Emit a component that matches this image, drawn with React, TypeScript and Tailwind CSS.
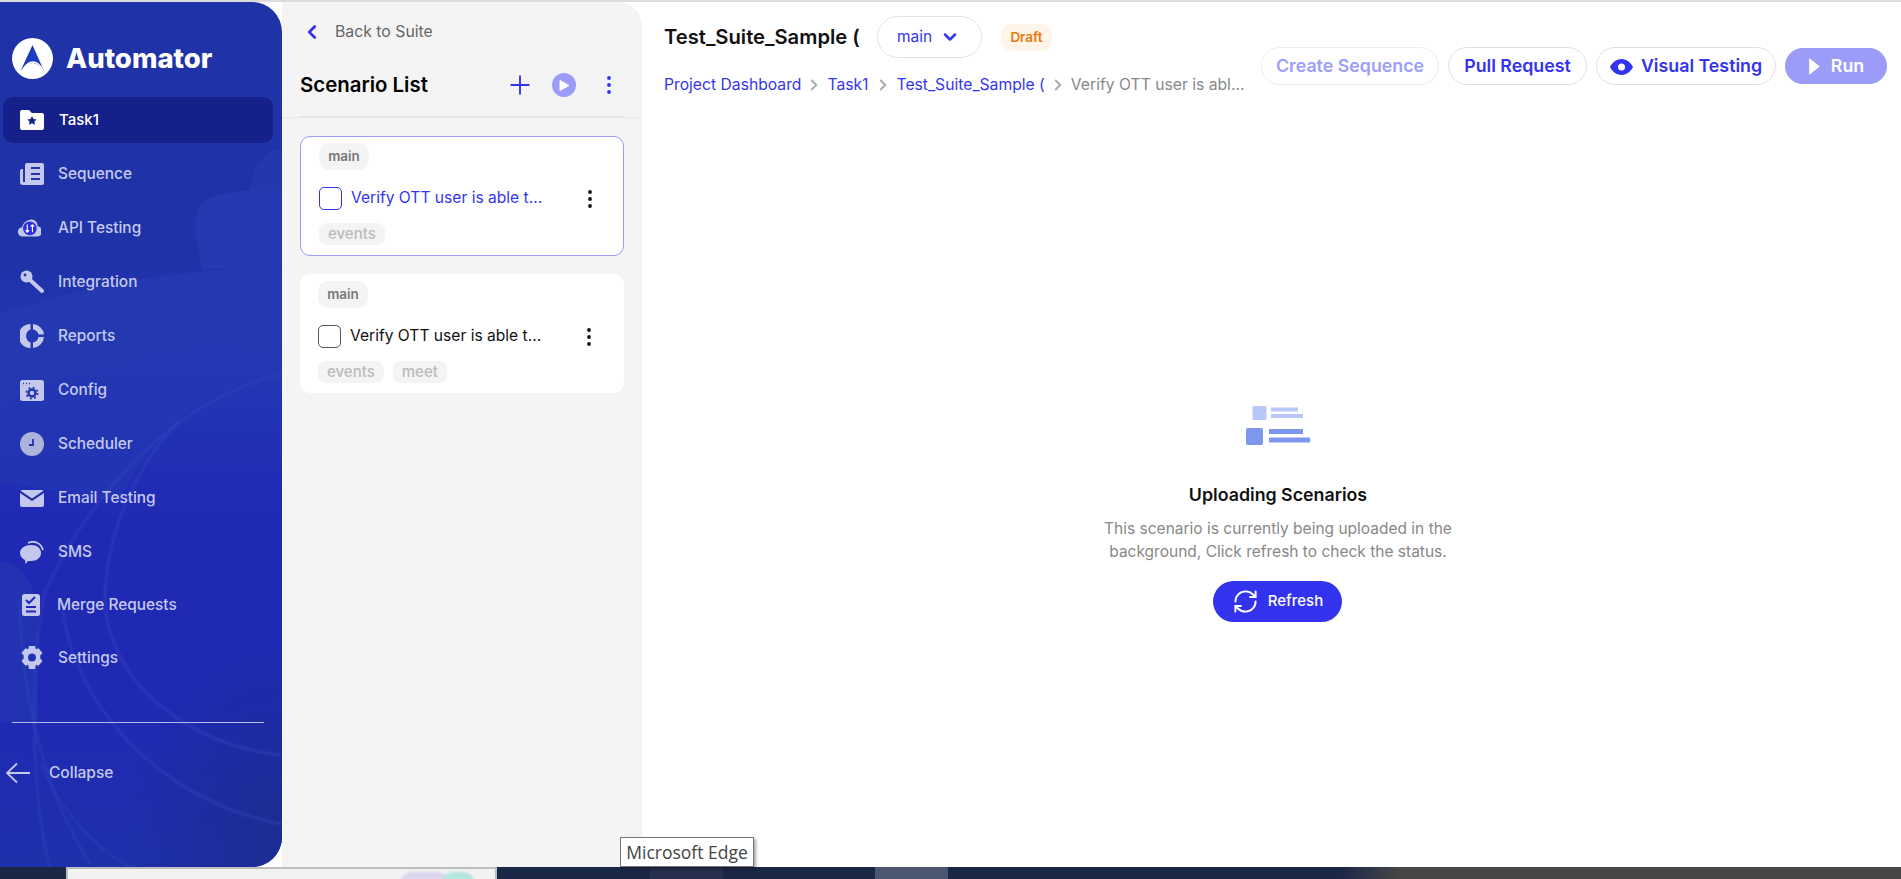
import React from "react";
import { ChevronLeft, ChevronRight, ChevronDown, Plus, RefreshCw } from "lucide-react";

const FONT = "font-['Inter','Liberation_Sans',sans-serif]";

function SidebarArt() {
  return (
    <svg className="absolute inset-0 h-full w-full" viewBox="0 0 282 865" preserveAspectRatio="none" aria-hidden="true">
      <defs>
        <linearGradient id="base" x1="0" y1="0" x2="0" y2="1">
          <stop offset="0" stopColor="#1f32a6" />
          <stop offset="0.3" stopColor="#1f32a8" />
          <stop offset="0.42" stopColor="#2337b4" />
          <stop offset="0.6" stopColor="#2029b4" />
          <stop offset="0.82" stopColor="#2029b4" />
          <stop offset="1" stopColor="#1e30aa" />
        </linearGradient>
        <radialGradient id="dark" cx="1" cy="0.9" r="0.55">
          <stop offset="0" stopColor="#1b2c92" />
          <stop offset="1" stopColor="#1b2c92" stopOpacity="0" />
        </radialGradient>
      </defs>
      <rect width="282" height="865" fill="url(#base)" />
      <rect y="500" width="282" height="365" fill="url(#dark)" />
      <path d="M282 147 C262 147 250 170 250 190 L282 190 Z" fill="#2438ae" />
      <path d="M282 188 C240 188 200 188 196 214 C193 234 203 262 201 268 L282 262 Z" fill="#2539b0" />
      <path d="M40 300 C100 282 170 270 282 262 L282 350 C230 338 170 340 130 360 C80 372 30 380 0 410 L0 310 Z" fill="#2438b2" />
      <path d="M130 345 C190 335 250 345 282 352 L282 372 C210 380 150 430 120 500 L0 480 L0 420 C40 380 90 360 130 345 Z" fill="#2439b3" opacity="0.6" />
      <path d="M0 560 C24 558 38 590 38 620 L38 720 L0 720 Z" fill="#2538b0" opacity="0.6" />
      <g fill="none" stroke="#3148be" strokeOpacity="0.5" className="blur-[1px]">
        <path d="M282 372 C180 395 90 490 45 590 C30 660 30 790 50 865" strokeWidth="2.500" />
        <path d="M180 418 C130 470 105 540 105 600 C108 680 190 745 282 753" strokeWidth="3" />
        <path d="M62 600 C70 700 160 800 282 822" strokeWidth="3" />
        <path d="M20 600 C20 700 50 800 90 862" strokeWidth="2.500" />
        <path d="M40 760 C60 810 100 850 130 865" strokeWidth="2" />
      </g>
    </svg>
  );
}

const C = "#c3c8ec";

function IconFolder() {
  return (
    <svg width="24" height="20" viewBox="0 0 24 20">
      <path d="M2 0h7l3 3h10a2 2 0 0 1 2 2v13a2 2 0 0 1-2 2H2a2 2 0 0 1-2-2V2a2 2 0 0 1 2-2z" fill="#fff" />
      <path d="M12 6l1.500 3 3.200.4-2.300 2.200.6 3.200L12 13.300l-3 1.500.6-3.200-2.300-2.200 3.200-.4z" fill="#15208a" />
    </svg>
  );
}
function IconSeq() {
  return (
    <svg width="24" height="22" viewBox="0 0 24 22">
      <path d="M7 0h15a2 2 0 0 1 2 2v18a2 2 0 0 1-2 2H3a3 3 0 0 1-3-3V8a2 2 0 0 1 2-2h3V2a2 2 0 0 1 2-2z" fill={C} />
      <path d="M5 6h-1v13M11 5h9M11 11h9M11 16h9" stroke="#2034a8" strokeWidth="2" fill="none" />
    </svg>
  );
}
function IconApi() {
  return (
    <svg width="28" height="20" viewBox="0 0 28 20">
      <path d="M7 20a5.500 5.500 0 0 1-1-11C7 4 11 1 16 0c5 0 8 3 8 8a5.500 5.500 0 0 1-1 12z" fill={C} />
      <circle cx="15" cy="10.500" r="8" fill="#2d30d8" />
      <path d="M12 6v9M12 15l-2-2.500M12 15l2-2.500M18 15V6M18 6l-2 2.500M18 6l2 2.500" stroke="#fff" strokeWidth="1.300" fill="none" />
    </svg>
  );
}
function IconKey() {
  return (
    <svg width="24" height="24" viewBox="0 0 24 24">
      <circle cx="6.500" cy="6.500" r="6" fill={C} />
      <circle cx="5" cy="5" r="1.400" fill="#2034a8" />
      <path d="M9 9l13 12" stroke={C} strokeWidth="4" strokeLinecap="round" />
    </svg>
  );
}
function IconReports() {
  return (
    <svg width="24" height="24" viewBox="0 0 24 24">
      <path d="M10.500 0v5.500A7 7 0 0 0 10.500 18.500V24A12 12 0 0 1 10.500 0z" fill={C} />
      <path d="M13 0a12 12 0 0 1 11 10.500h-5.500A7 7 0 0 0 13 5.500z" fill={C} />
      <path d="M24 13a12 12 0 0 1-11 11v-5.500a7 7 0 0 0 5.500-5.500z" fill={C} />
    </svg>
  );
}
function IconConfig() {
  return (
    <svg width="24" height="21" viewBox="0 0 24 21">
      <rect width="24" height="21" rx="2.500" fill={C} />
      <path d="M3 3.500h1M6 3.500h1M9 3.500h1" stroke="#2034a8" strokeWidth="1.400" />
      <circle cx="12" cy="13" r="3.500" fill="none" stroke="#2034a8" strokeWidth="2.400" />
      <circle cx="12" cy="13" r="5.600" fill="none" stroke="#2034a8" strokeWidth="1.600" strokeDasharray="2 2.400" />
    </svg>
  );
}
function IconClock() {
  return (
    <svg width="24" height="24" viewBox="0 0 24 24">
      <circle cx="12" cy="12" r="12" fill="#adb3dc" />
      <path d="M13 7v6H9" stroke="#2034a8" strokeWidth="1.800" fill="none" />
    </svg>
  );
}
function IconMail() {
  return (
    <svg width="24" height="17" viewBox="0 0 24 17">
      <path d="M2 0h20a2 2 0 0 1 1.500.7L12 8.500.5.700A2 2 0 0 1 2 0z" fill={C} />
      <path d="M0 3l12 8 12-8v12a2 2 0 0 1-2 2H2a2 2 0 0 1-2-2z" fill={C} />
    </svg>
  );
}
function IconSms() {
  return (
    <svg width="24" height="23" viewBox="0 0 24 23">
      <path d="M11 4c6 0 10 3.500 10 8s-4 8-10 8l-3 0-2.500 3-.5-4C2 17.500 0 15 0 12c0-4.500 5-8 11-8z" fill={C} />
      <path d="M8 2c6-3 13 0 15 7" stroke={C} strokeWidth="1.800" fill="none" />
    </svg>
  );
}
function IconMerge() {
  return (
    <svg width="18" height="22" viewBox="0 0 18 22">
      <rect width="18" height="22" rx="2.500" fill={C} />
      <path d="M4 6l3 3 6-6M4 13h10M4 17.500h10" stroke="#2029b4" strokeWidth="2" fill="none" />
    </svg>
  );
}
function IconGear() {
  return (
    <svg width="22" height="23" viewBox="0 0 22 23">
      <path
        fillRule="evenodd"
        d="M8 0h6l.8 3.300 2.700-1.100L21.500 7l-2.300 2.400c.2 1 .2 2.200 0 3.200l2.300 2.400-4 4.800-2.700-1.100L14 23H8l-.8-4.300-2.700 1.100-4-4.800 2.300-2.400a8 8 0 0 1 0-3.200L.5 7l4-4.800 2.700 1.100zM11 7.500a4 4 0 1 0 0 8 4 4 0 0 0 0-8z"
        fill={C}
      />
    </svg>
  );
}

const NAV: { label: string; icon: React.ReactNode; row: string; gap: string }[] = [
  { label: "Sequence", icon: <IconSeq />, row: "h-[54px] pl-[20px]", gap: "ml-[14px]" },
  { label: "API Testing", icon: <IconApi />, row: "h-[54px] pl-[17px]", gap: "ml-[17px]" },
  { label: "Integration", icon: <IconKey />, row: "h-[54px] pl-[20px]", gap: "ml-[14px]" },
  { label: "Reports", icon: <IconReports />, row: "h-[54px] pl-[20px]", gap: "ml-[14px]" },
  { label: "Config", icon: <IconConfig />, row: "h-[54px] pl-[20px]", gap: "ml-[14px]" },
  { label: "Scheduler", icon: <IconClock />, row: "h-[54px] pl-[20px]", gap: "ml-[14px]" },
  { label: "Email Testing", icon: <IconMail />, row: "h-[54px] pl-[20px]", gap: "ml-[14px]" },
  { label: "SMS", icon: <IconSms />, row: "h-[54px] pl-[20px]", gap: "ml-[14px]" },
  { label: "Merge Requests", icon: <IconMerge />, row: "h-[52px] pl-[22px]", gap: "ml-[11px]" },
  { label: "Settings", icon: <IconGear />, row: "h-[53px] pl-[21px]", gap: "ml-[13px]" },
];

function Sidebar() {
  return (
    <aside className="relative w-[282px] shrink-0 overflow-hidden rounded-tr-[30px] rounded-br-[30px]">
      <SidebarArt />
      <div className="relative flex h-full flex-col">
        <div className="mt-[36px] flex items-center pl-[12px]">
          <svg width="41" height="41" viewBox="0 0 41 41">
            <circle cx="20.500" cy="20.500" r="20.500" fill="#fff" />
            <path d="M20.500 7 L32 33 C27 27 24 25 20.500 25 C16 25 13 28 8.500 33 Z" fill="#1d3bc0" />
            <path d="M10 32.500 C14 26 18 24 21 24 C25 24 28 27 31 32" fill="none" stroke="#fff" strokeWidth="1.500" />
          </svg>
          <span className="ml-[13px] text-[27.500px] leading-none font-extrabold text-white">Automator</span>
        </div>
        <div className="mx-[3px] mt-[18px] flex h-[46px] w-[270px] items-center rounded-[10px] bg-[#15208a] pl-[17px]">
          <IconFolder />
          <span className="ml-[15px] text-[15px] font-medium text-white">Task1</span>
        </div>
        <nav className="mt-[4px] flex flex-col">
          {NAV.map((n) => (
            <div key={n.label} className={`flex items-center ${n.row}`}>
              <span className="flex w-[24px] shrink-0 justify-start">{n.icon}</span>
              <span className={`text-[15.400px] font-medium whitespace-nowrap text-[#c5c9ec] ${n.gap}`}>{n.label}</span>
            </div>
          ))}
        </nav>
        <div className="mx-[12px] mt-[38px] h-px w-[252px] bg-[#b5bbe6]" />
        <div className="mt-[38px] flex items-center pl-[6px]">
          <svg width="24" height="22" viewBox="0 0 24 22" fill="none" stroke="#c5c9ec" strokeWidth="1.800">
            <path d="M24 11H1M11 1.500L1 11l10 9.500" />
          </svg>
          <span className="ml-[19px] text-[15.500px] font-medium text-[#c5c9ec]">Collapse</span>
        </div>
      </div>
    </aside>
  );
}

function Dots({ className }: { className: string }) {
  return (
    <svg width="4" height="18" viewBox="0 0 4 18" className={className} fill="currentColor">
      <circle cx="2" cy="2" r="1.900" />
      <circle cx="2" cy="9" r="1.900" />
      <circle cx="2" cy="16" r="1.900" />
    </svg>
  );
}

function Card({ active, tags }: { active?: boolean; tags: string[] }) {
  return (
    <div
      className={`flex flex-col rounded-[10px] bg-white pl-[18px] ${
        active ? "h-[120px] border border-[#9a9cf8] pt-[6px]" : "h-[119px] pt-[7px]"
      }`}
    >
      <span className="flex h-[27px] w-[50px] items-center justify-center rounded-[10px] bg-[#f4f4f4] text-[13.500px] font-semibold text-[#777]">main</span>
      <div className="mt-[17px] flex h-[23px] items-center">
        <span className={`h-[23px] w-[23px] shrink-0 rounded-[5px] border bg-white ${active ? "border-[#3333ee]" : "border-[#555]"}`} />
        <span className={`ml-[9px] w-[222px] pb-[1px] text-[15.600px] whitespace-nowrap ${active ? "text-[#3535f0]" : "text-[#111]"}`}>Verify OTT user is able t...</span>
        <Dots className="ml-[15px] text-[#111]" />
      </div>
      <div className="mt-[13px] flex gap-[9px]">
        {tags.map((t) => (
          <span key={t} className="flex h-[22px] items-center rounded-[8px] bg-[#f4f4f4] px-[9px] text-[15px] font-medium text-[#bbb]">
            {t}
          </span>
        ))}
      </div>
    </div>
  );
}

function ScenarioPanel() {
  return (
    <section className="flex w-[360px] shrink-0 flex-col rounded-tr-[24px] bg-[#f4f4f4]">
      <div className="flex h-[60px] items-center pl-[19px]">
        <ChevronLeft size={22} strokeWidth={3} className="text-[#3333ee]" />
        <span className="ml-[12px] text-[15.800px] text-[#666]">Back to Suite</span>
      </div>
      <div className="mx-[18px] flex h-[55px] items-start border-b border-[#e4e4e4] pt-[6px]">
        <span className="flex h-[34px] w-[127px] shrink-0 items-center text-[20.400px] font-semibold whitespace-nowrap text-black">Scenario List</span>
        <Plus size={30} strokeWidth={1.500} className="ml-[78px] mt-[2px] shrink-0 text-[#3333ee]" />
        <span className="ml-[17px] mt-[5px] flex h-[24px] w-[24px] shrink-0 items-center justify-center rounded-full bg-[#9a9cf8]">
          <svg width="11" height="13" viewBox="0 0 11 13">
            <path d="M1 1.500 L10 6.500 L1 11.500 Z" fill="#fff" stroke="#fff" strokeLinejoin="round" />
          </svg>
        </span>
        <Dots className="ml-[31px] mt-[8px] shrink-0 text-[#3333ee]" />
      </div>
      <div className="h-px bg-[#e8e8e8]" />
      <div className="mx-[18px] mt-[18px] flex flex-col gap-[18px]">
        <Card active tags={["events"]} />
        <Card tags={["events", "meet"]} />
      </div>
    </section>
  );
}

function Header() {
  return (
    <header className="flex justify-between pl-[22px] pr-[14px]">
      <div className="flex flex-col">
        <div className="mt-[14px] flex h-[42px] items-center">
          <span className="w-[195px] text-[20.200px] font-semibold whitespace-nowrap text-[#111]">Test_Suite_Sample (</span>
          <span className="ml-[18px] flex h-[42px] w-[105px] items-center rounded-full border border-[#e3e3e3] pl-[19px] text-[15.500px] text-[#3535f0]">
            main
            <ChevronDown size={20} strokeWidth={3} className="ml-[8px]" />
          </span>
          <span className="ml-[19px] flex h-[27px] w-[51px] items-center justify-center rounded-[10px] bg-[#fff4e8] text-[13.500px] font-semibold text-[#ea7a0c]">Draft</span>
        </div>
        <div className="mt-[17px] flex h-[20px] items-center text-[15.700px] whitespace-nowrap text-[#3535f0]">
          <span>Project Dashboard</span>
          <ChevronRight size={18} strokeWidth={2.500} className="mx-[4px] text-[#aaa]" />
          <span>Task1</span>
          <ChevronRight size={18} strokeWidth={2.500} className="mx-[5px] text-[#aaa]" />
          <span>Test_Suite_Sample (</span>
          <ChevronRight size={18} strokeWidth={2.500} className="mx-[4px] text-[#aaa]" />
          <span className="text-[#888]">Verify OTT user is abl...</span>
        </div>
      </div>
      <div className="mt-[45px] flex h-[38px] items-center gap-[9px] text-[17.800px] font-semibold">
        <button className="h-[38px] w-[178px] rounded-full border border-[#eee] pt-[1px] text-[#9d9ef8]">Create Sequence</button>
        <button className="h-[38px] w-[139px] rounded-full border border-[#e0e0e0] pt-[1px] text-[#3333ee]">Pull Request</button>
        <button className="flex h-[38px] w-[180px] items-center justify-center gap-[8px] rounded-full border border-[#e0e0e0] pt-[1px] text-[#3333ee]">
          <svg width="23" height="16" viewBox="0 0 23 16">
            <path fillRule="evenodd" d="M11.500 0C17 0 21 4 23 8c-2 4-6 8-11.500 8S2 12 0 8c2-4 6-8 11.500-8zm0 4.500a3.500 3.500 0 1 0 0 7 3.500 3.500 0 0 0 0-7z" fill="#3333ee" />
          </svg>
          Visual Testing
        </button>
        <button className="flex h-[36px] w-[102px] items-center justify-center gap-[11px] rounded-full bg-[#9a9cf8] pl-[1px] pt-[1px] text-white">
          <svg width="11" height="17" viewBox="0 0 10 16">
            <path d="M0 0 L10 8 L0 16 Z" fill="#fff" />
          </svg>
          Run
        </button>
      </div>
    </header>
  );
}

function EmptyState() {
  return (
    <div className="flex flex-1 flex-col items-center pl-[13px] pt-[311px]">
      <svg width="64" height="39" viewBox="0 0 64 39">
        <rect x="6.500" y="0" width="14" height="14" rx="1.500" fill="#b9c6f8" />
        <rect x="25" y="1.500" width="27" height="4" fill="#b9c6f8" />
        <rect x="25" y="8" width="32" height="4" fill="#b9c6f8" />
        <rect x="0" y="22" width="17" height="17" rx="2" fill="#7e97ee" />
        <rect x="23" y="23" width="34" height="5" fill="#7e97ee" />
        <rect x="23" y="31.500" width="41" height="5" fill="#7e97ee" />
      </svg>
      <h2 className="mt-[38px] text-[17.800px] leading-[24px] font-semibold text-[#111]">Uploading Scenarios</h2>
      <p className="mt-[10px] text-center text-[15.500px] leading-[23px] text-[#888]">
        This scenario is currently being uploaded in the
        <br />
        background, Click refresh to check the status.
      </p>
      <button className="mt-[18px] -ml-[1px] flex h-[41px] w-[129px] items-center justify-center gap-[9px] rounded-full bg-[#3333ee] text-[15px] font-medium text-white">
        <RefreshCw size={27} strokeWidth={1.700} />
        Refresh
      </button>
    </div>
  );
}

function Taskbar() {
  return (
    <footer className="relative flex h-[12px] shrink-0 overflow-hidden bg-[#1b2747]">
      <div className="w-[66px] shrink-0" />
      <div className="relative w-[431px] shrink-0 overflow-hidden border-x-2 border-t-2 border-[#bdbdbd] bg-[#f2f2f2]">
        <span className="absolute left-[332px] top-[3px] h-[24px] w-[50px] rounded-full bg-[#dcd7f0] blur-[1px]" />
        <span className="absolute left-[373px] top-[3px] h-[24px] w-[34px] rounded-full bg-[#b5e6e0] blur-[1px]" />
      </div>
      <div className="w-[153px] shrink-0" />
      <div className="w-[73px] shrink-0 bg-[#262f4f]" />
      <div className="w-[152px] shrink-0" />
      <div className="w-[73px] shrink-0 bg-[#4b5670]" />
      <div className="w-[392px] shrink-0" />
      <div className="w-[60px] shrink-0 bg-gradient-to-r from-[#1b2747] to-[#464646]" />
      <div className="relative flex-1 bg-[#464646]">
        <span className="absolute left-[359px] top-[9px] font-['Open_Sans',sans-serif] text-[13px] leading-[16px] text-white">12:30</span>
      </div>
    </footer>
  );
}

export default function App() {
  return (
    <div className={`relative flex h-screen w-full flex-col overflow-hidden bg-white ${FONT}`}>
      <div className="h-[2px] shrink-0 bg-[#dcdcdc]" />
      <div className="flex min-h-0 flex-1">
        <Sidebar />
        <ScenarioPanel />
        <main className="flex min-w-0 flex-1 flex-col">
          <Header />
          <EmptyState />
        </main>
      </div>
      <Taskbar />
      <div className="absolute bottom-[12px] left-[620px] flex h-[30px] w-[134px] items-center justify-center border border-[#777] bg-white font-['Open_Sans',sans-serif] text-[17.500px] text-[#444] shadow-[2px_2px_3px_rgba(0,0,0,0.35)]">
        Microsoft Edge
      </div>
    </div>
  );
}
